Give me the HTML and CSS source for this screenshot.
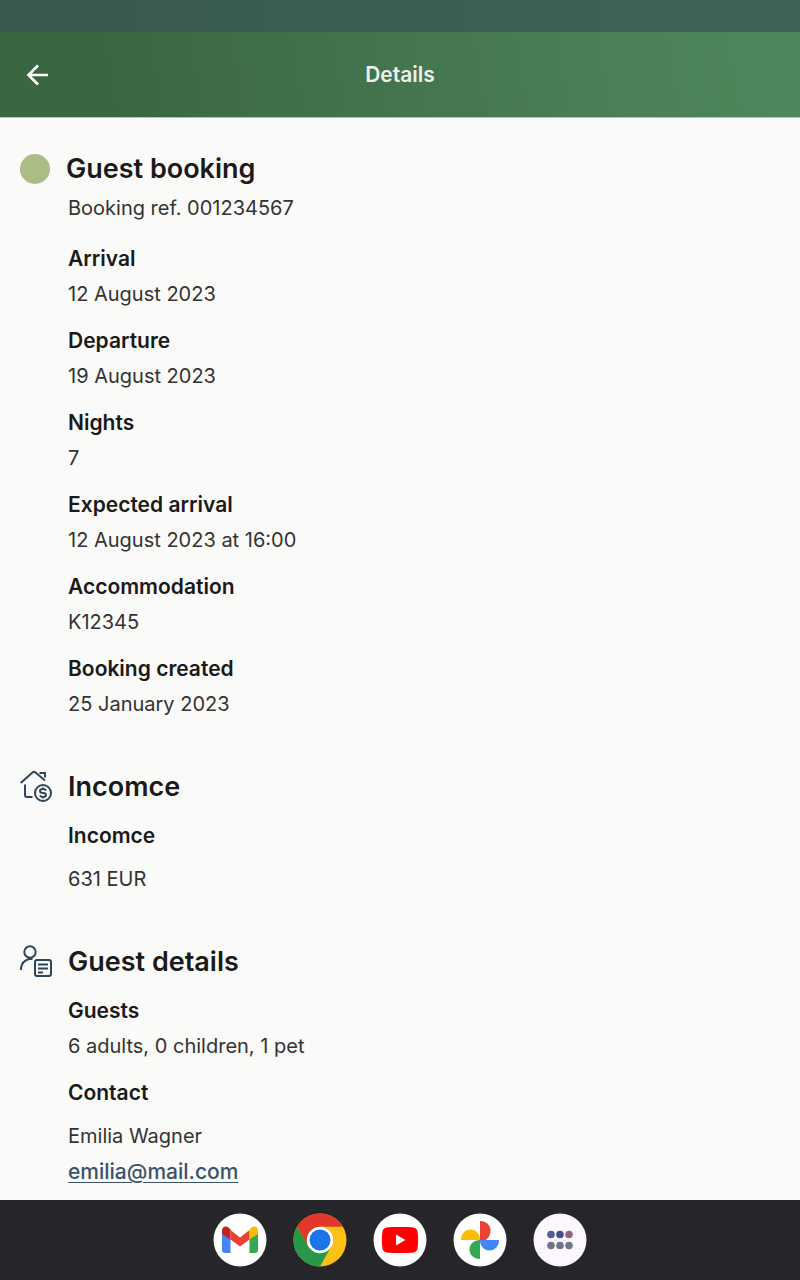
FILE: index.html
```
<!DOCTYPE html>
<html lang="en">
<head>
    <meta charset="UTF-8">
    <meta name="viewport" content="width=device-width, initial-scale=1.0">
    <title>Details</title>
    <link rel="stylesheet" href="styles.css">
</head>
<body>

    <div class="status-bar"></div>

    <header class="top-bar">
        <button class="back" type="button" aria-label="Back">
            <svg width="24" height="24" viewBox="0 0 24 24" fill="none" stroke="#fff" stroke-width="2.7">
                <path d="M23 12H4M13 2.500L3.500 12l9.500 9.500"/>
            </svg>
        </button>
        <h1>Details</h1>
    </header>

    <main>
        <section>
            <h2><span class="dot"></span>Guest booking</h2>
            <div class="content">
                <p class="ref">Booking ref. 001234567</p>
                <dl>
                    <div>
                        <dt>Arrival</dt>
                        <dd>12 August 2023</dd>
                    </div>
                    <div>
                        <dt>Departure</dt>
                        <dd>19 August 2023</dd>
                    </div>
                    <div>
                        <dt>Nights</dt>
                        <dd>7</dd>
                    </div>
                    <div>
                        <dt>Expected arrival</dt>
                        <dd>12 August 2023 at 16:00</dd>
                    </div>
                    <div>
                        <dt>Accommodation</dt>
                        <dd>K12345</dd>
                    </div>
                    <div>
                        <dt>Booking created</dt>
                        <dd>25 January 2023</dd>
                    </div>
                </dl>
            </div>
        </section>

        <section>
            <h2>
                <!-- house with coin -->
                <svg class="icon" viewBox="0 0 32 32">
                    <path d="M.7 12L12.500 1.500q1.500-1.200 3 0L25 9.500M19.500 2H25v4.500M5 13.500v10.500q0 2 2 2h5.500"/>
                    <circle cx="23" cy="22" r="8"/>
                    <path d="M26 19.500q-.8-1.500-3-1.500c-4 0-4 4 0 4s4 4 0 4q-2.200 0-3-1.500M23 16.500V18M23 26v1.500"/>
                </svg>
                Incomce
            </h2>
            <dl class="content">
                <div class="spaced">
                    <dt>Incomce</dt>
                    <dd>631 EUR</dd>
                </div>
            </dl>
        </section>

        <section>
            <h2>
                <!-- person with card -->
                <svg class="icon" viewBox="0 0 32 32">
                    <circle cx="10" cy="6" r="5.700"/>
                    <path d="M1 24v-2q1-7 8-9h3.500"/>
                    <rect x="15" y="14" width="16" height="16" rx="2"/>
                    <path d="M18 18.500h10M18 22.500h10M18 26.500h5"/>
                </svg>
                Guest details
            </h2>
            <dl class="content">
                <div>
                    <dt>Guests</dt>
                    <dd>6 adults, 0 children, 1 pet</dd>
                </div>
                <div class="spaced">
                    <dt>Contact</dt>
                    <dd>Emilia Wagner</dd>
                    <dd><a href="mailto:emilia@mail.com">emilia@mail.com</a></dd>
                </div>
            </dl>
        </section>
    </main>

    <nav class="dock">
        <button type="button" aria-label="Gmail">
            <svg viewBox="0 0 54 54">
                <circle cx="27" cy="27" r="26.500" fill="#fff"/>
                <path d="M9 20v17q0 3 3 3h5.500V26z" fill="#4285f4"/>
                <path d="M45 20v17q0 3-3 3h-5.500V26z" fill="#34a853"/>
                <path d="M17.500 17l9.500 7.500 9.500-7.500v9.500L27 33.500l-9.500-7z" fill="#ea4335"/>
                <path d="M9 21v-3.500c0-4 4-5 6.500-3l2 2v10z" fill="#c5221f"/>
                <path d="M45 21v-3.500c0-4-4-5-6.500-3l-2 2v10z" fill="#fbbc04"/>
            </svg>
        </button>
        <button type="button" aria-label="Chrome">
            <svg viewBox="0 0 54 54">
                <circle cx="27" cy="27" r="26.500" fill="#fbc116"/>
                <path d="M4.050 13.750A26.500 26.500 0 0 0 27 53.500L38.300 33.500 27 27 15.700 33.500z" fill="#279847"/>
                <path d="M4.050 13.750A26.500 26.500 0 0 1 49.950 13.750H27V27L15.700 33.500z" fill="#e2382b"/>
                <circle cx="27" cy="27" r="13.200" fill="#fff"/>
                <circle cx="27" cy="27" r="10.500" fill="#1a73e8"/>
            </svg>
        </button>
        <button type="button" aria-label="YouTube">
            <svg viewBox="0 0 54 54">
                <circle cx="27" cy="27" r="26.500" fill="#fff"/>
                <path d="M27 14c-5 0-10 0-13.500.6q-3.500.8-4 4c-.9 5-.9 11.800 0 16.800q.5 3.200 4 4C17 40 22 40 27 40s10 0 13.500-.6q3.500-.8 4-4c.9-5 .9-11.800 0-16.800q-.5-3.200-4-4C37 14 32 14 27 14z" fill="#f00"/>
                <path d="M23 21.500v11l9.500-5.500z" fill="#fff"/>
            </svg>
        </button>
        <button type="button" aria-label="Photos">
            <svg viewBox="0 0 54 54">
                <circle cx="27" cy="27" r="26.500" fill="#fff"/>
                <path d="M27 8c6 0 10.500 4 10.500 9.500q0 5.500-4.500 9.500h-6z" fill="#ea4335"/>
                <path d="M46 27c0 6-4 10.500-9.500 10.500S27 33 27 27z" fill="#4285f4"/>
                <path d="M27 46c-6 0-10.500-4-10.500-9.500S21 27 27 27z" fill="#34a853"/>
                <path d="M8 27c0-6 4-10.500 9.500-10.500S27 21 27 27z" fill="#fbbc04"/>
            </svg>
        </button>
        <button type="button" aria-label="All apps">
            <svg viewBox="0 0 54 54">
                <circle cx="27" cy="27" r="26.500" fill="#fdf8ff"/>
                <circle cx="18" cy="21.500" r="3.800" fill="#535c94"/>
                <circle cx="27" cy="21.500" r="3.800" fill="#454f8b"/>
                <circle cx="36" cy="21.500" r="3.800" fill="#906580"/>
                <g fill="#71758a">
                    <circle cx="18" cy="32.500" r="3.800"/>
                    <circle cx="27" cy="32.500" r="3.800"/>
                    <circle cx="36" cy="32.500" r="3.800"/>
                </g>
            </svg>
        </button>
    </nav>

</body>
</html>
```
FILE: styles.css
```
* {
    box-sizing: border-box;
}

body {
    margin: 0;
    height: 100vh;
    display: flex;
    flex-direction: column;
    background: #fafaf8;
    color: #333333;
    font-family: Inter, "Open Sans", sans-serif;
    font-size: 20px;
}

h1, h2, p, dl, dd {
    margin: 0;
}

button {
    padding: 0;
    border: none;
    background: none;
    cursor: pointer;
}

svg {
    display: block;
}

.status-bar {
    flex: none;
    height: 32px;
    background: linear-gradient(to right, #39584f, #3e6457);
}

.top-bar {
    flex: none;
    display: grid;
    grid-template-columns: 1fr auto 1fr;
    align-items: center;
    height: 86px;
    padding: 0 25px;
    border-bottom: 1px solid #b4c2b6;
    background: linear-gradient(80deg, #3a6742 15%, #4a7f57 75%, #4d865c 95%);
}

.back {
    justify-self: start;
}

.top-bar h1 {
    color: #eef0ec;
    font-size: 21px;
    font-weight: 600;
    line-height: 30px;
}

main {
    flex: 1;
    min-height: 0;
    overflow: hidden;
    padding: 30px 20px 0;
}

section + section {
    margin-top: 44px;
}

h2 {
    display: flex;
    align-items: center;
    gap: 16px;
    color: #1a1a1a;
    font-size: 27px;
    font-weight: 600;
    line-height: 42px;
}

.dot {
    width: 30px;
    height: 30px;
    border-radius: 50%;
    background: #abbc85;
}

.icon {
    width: 32px;
    height: 32px;
    overflow: visible;
    fill: none;
    stroke: #2f455c;
    stroke-width: 2;
}

.content {
    padding-left: 48px;
}

h2 + dl {
    margin-top: 11px;
}

.ref {
    margin-bottom: 16px;
    line-height: 36px;
}

dl div + div {
    margin-top: 12px;
}

dt {
    color: #1a1a1a;
    font-size: 21px;
    font-weight: 600;
    line-height: 34px;
}

dd {
    line-height: 36px;
}

.spaced dt {
    margin-bottom: 8px;
}

a {
    color: #3b526b;
    font-size: 21px;
    font-weight: 500;
    text-decoration-thickness: 1px;
    text-underline-offset: 3px;
}

.dock {
    flex: none;
    display: flex;
    justify-content: center;
    align-items: center;
    gap: 26px;
    height: 80px;
    background: #26252a;
}

.dock svg {
    width: 54px;
    height: 54px;
}
```
